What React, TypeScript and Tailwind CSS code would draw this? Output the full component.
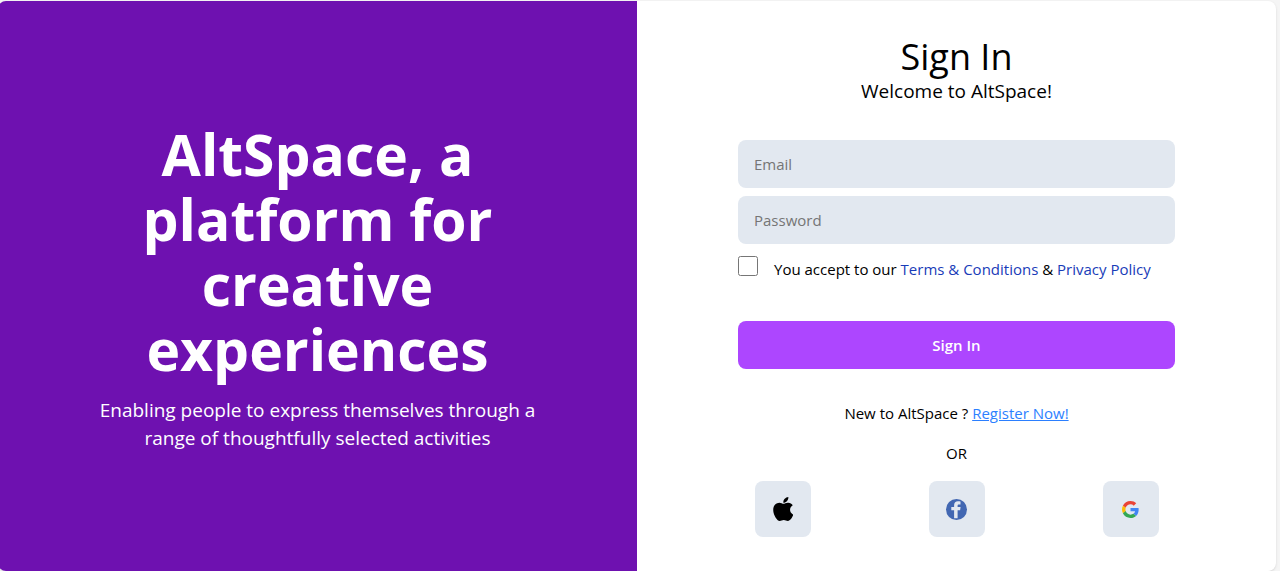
import React from "react";

const AppleIcon = () => (
  <svg viewBox="4 32 365 448" className="h-6 w-5" aria-hidden="true">
    <path
      fill="#000"
      d="M318.7 268.7c-.2-36.7 16.4-64.4 50-84.8-18.8-26.9-47.2-41.7-84.7-44.6-35.5-2.8-74.3 20.7-88.5 20.7-15 0-49.4-19.7-76.4-19.7C63.3 141.2 4 184.8 4 273.5q0 39.3 14.4 81.2c12.8 36.7 59 126.7 107.2 125.2 25.2-.6 43-17.9 75.8-17.9 31.8 0 48.3 17.9 76.4 17.9 48.6-.7 90.4-82.5 102.6-119.3-65.2-30.7-61.7-90-61.7-91.9zm-56.6-164.2c27.3-32.4 24.8-61.9 24-72.5-24.1 1.4-52 16.4-67.9 34.9-17.5 19.8-27.8 44.3-25.6 71.9 26.1 2 49.9-11.4 69.5-34.3z"
    />
  </svg>
);

const FacebookIcon = () => (
  <svg viewBox="0 0 21 21" className="h-[21px] w-[21px]" aria-hidden="true">
    <circle cx="10.5" cy="10.5" r="10.5" fill="#4267b2" />
    <path
      fill="#e2e8f0"
      d="M8.100 19.200v-7.900H5.300V7.900h2.800V6.200c0-2.600 1.500-4 3.900-4 1.100 0 2.100.1 2.500.2v3h-1.500c-1.100 0-1.400.5-1.400 1.300v1.200h3l-.5 3.400h-2.500v7.900z"
    />
  </svg>
);

const GoogleIcon = () => (
  <svg viewBox="0 0 48 48" className="h-[17px] w-[17px]" aria-hidden="true">
    <path fill="#EA4335" d="M24 9.500c3.540 0 6.710 1.220 9.210 3.600l6.850-6.850C35.900 2.380 30.470 0 24 0 14.620 0 6.510 5.380 2.560 13.220l7.980 6.190C12.430 13.720 17.740 9.500 24 9.500z" />
    <path fill="#4285F4" d="M46.980 24.550c0-1.570-.15-3.090-.38-4.550H24v9.020h12.940c-.58 2.960-2.260 5.480-4.780 7.180l7.730 6c4.510-4.180 7.090-10.360 7.090-17.650z" />
    <path fill="#FBBC05" d="M10.530 28.590c-.48-1.450-.76-2.990-.76-4.590s.27-3.140.76-4.590l-7.980-6.190C.92 16.460 0 20.120 0 24c0 3.880.92 7.540 2.560 10.780l7.970-6.190z" />
    <path fill="#34A853" d="M24 48c6.480 0 11.930-2.130 15.890-5.810l-7.730-6c-2.150 1.450-4.920 2.300-8.160 2.300-6.260 0-11.570-4.220-13.470-9.910l-7.980 6.190C6.510 42.620 14.620 48 24 48z" />
  </svg>
);

const providers = [
  { name: "Apple", icon: <AppleIcon /> },
  { name: "Facebook", icon: <FacebookIcon /> },
  { name: "Google", icon: <GoogleIcon /> },
];

export default function App() {
  const [email, setEmail] = React.useState("");
  const [password, setPassword] = React.useState("");
  const [accepted, setAccepted] = React.useState(false);

  const handleSubmit = (e: React.FormEvent) => {
    e.preventDefault();
  };

  return (
    <main className="min-h-screen bg-[#f5f5f5] pt-px pr-1 font-['Open_Sans','Noto_Sans',sans-serif] text-[15px] leading-6 text-black">
      <div className="-ml-0.5 grid min-h-[570px] grid-cols-2 overflow-hidden rounded-lg bg-white shadow">
        {/* Intro panel */}
        <section className="flex flex-col items-center justify-center bg-purple-800 px-24 pt-0.5 text-center text-white">
          <h1 className="max-w-[400px] text-[57px] leading-[65px] font-bold">
            AltSpace, a platform for creative experiences
          </h1>
          <p className="mt-3.5 max-w-[450px] text-[19px] leading-7">
            Enabling people to express themselves through a range of
            thoughtfully selected activities
          </p>
        </section>

        {/* Sign in form */}
        <section className="flex flex-col items-center px-6 pt-9">
          <h2 className="text-4xl leading-10">Sign In</h2>
          <p className="text-[19px] leading-7">Welcome to AltSpace!</p>

          <form
            onSubmit={handleSubmit}
            className="mt-[35px] flex w-full max-w-[437px] flex-col"
          >
            <input
              type="email"
              aria-label="Email"
              placeholder="Email"
              value={email}
              onChange={(e) => setEmail(e.target.value)}
              className="h-12 rounded-lg bg-slate-200 px-4 placeholder:text-[#757575]"
            />
            <input
              type="password"
              aria-label="Password"
              placeholder="Password"
              value={password}
              onChange={(e) => setPassword(e.target.value)}
              className="mt-2 h-12 rounded-lg bg-slate-200 px-4 placeholder:text-[#757575]"
            />
            <div className="mt-3 flex gap-4">
              <input
                id="accept"
                type="checkbox"
                checked={accepted}
                onChange={(e) => setAccepted(e.target.checked)}
                className="h-5 w-5 shrink-0"
              />
              <label htmlFor="accept" className="pt-px">
                You accept to our{" "}
                <a href="#terms" className="text-blue-800">
                  Terms &amp; Conditions
                </a>{" "}
                &amp;{" "}
                <a href="#privacy" className="text-blue-800">
                  Privacy Policy
                </a>
              </label>
            </div>
            <button
              type="submit"
              className="mt-10 h-12 rounded-lg bg-purple-500 font-semibold text-white"
            >
              Sign In
            </button>
          </form>

          <p className="mt-8">
            New to AltSpace ?{" "}
            <a href="#register" className="text-blue-500 underline">
              Register Now!
            </a>
          </p>
          <p className="mt-4">OR</p>

          <div className="mt-4 flex w-full max-w-[404px] justify-between pb-8">
            {providers.map((provider) => (
              <button
                key={provider.name}
                type="button"
                aria-label={`Sign in with ${provider.name}`}
                className="flex h-14 w-14 items-center justify-center rounded-lg bg-slate-200"
              >
                {provider.icon}
              </button>
            ))}
          </div>
        </section>
      </div>
    </main>
  );
}
